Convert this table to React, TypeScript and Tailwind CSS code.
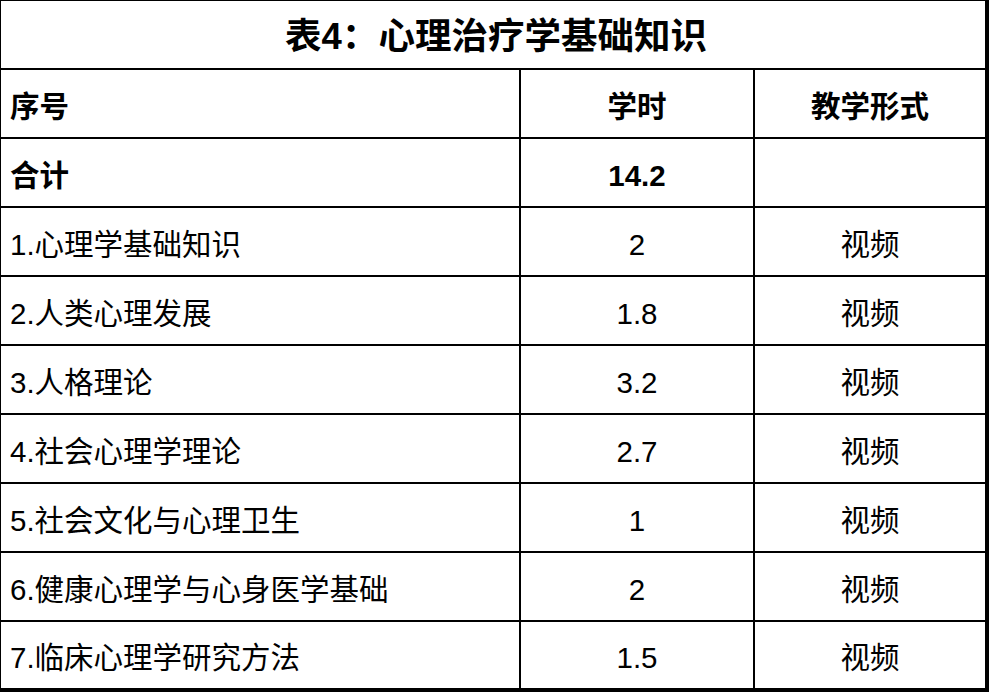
import React from "react";

const rows: [string, string, string][] = [
  ["1.心理学基础知识", "2", "视频"],
  ["2.人类心理发展", "1.8", "视频"],
  ["3.人格理论", "3.2", "视频"],
  ["4.社会心理学理论", "2.7", "视频"],
  ["5.社会文化与心理卫生", "1", "视频"],
  ["6.健康心理学与心身医学基础", "2", "视频"],
  ["7.临床心理学研究方法", "1.5", "视频"],
];

const font = { fontFamily: '"Liberation Sans", "Noto Sans CJK SC", sans-serif' };

function Row({
  a,
  b,
  c,
  bold,
  last,
}: {
  a: string;
  b: string;
  c: string;
  bold?: boolean;
  last?: boolean;
}) {
  const weight = bold ? "font-bold" : "font-normal";
  return (
    <div
      className={`flex ${last ? "flex-1" : "h-[69px] border-b-2"} border-black text-[29.5px] leading-none text-black ${weight}`}
    >
      <div className="w-[520px] border-r-2 border-black flex items-center pl-[9px] pt-[6px]">{a}</div>
      <div className="w-[234px] border-r-2 border-black flex items-center justify-center pt-[6px]">{b}</div>
      <div className="flex-1 flex items-center justify-center pt-[6px]">{c}</div>
    </div>
  );
}

export default function App() {
  return (
    <div className="bg-white" style={font}>
      <div className="w-[989px] h-[692px] flex flex-col border-l border-t border-r-4 border-b-4 border-black bg-white">
        <div className="h-[69px] border-b-2 border-black flex items-center justify-center pt-[5px] pl-[6px] text-[36.5px] leading-none font-bold text-black">
          表4：心理治疗学基础知识
        </div>
        <Row a="序号" b="学时" c="教学形式" bold />
        <Row a="合计" b="14.2" c="" bold />
        {rows.map((r, i) => (
          <Row key={i} a={r[0]} b={r[1]} c={r[2]} last={i === rows.length - 1} />
        ))}
      </div>
    </div>
  );
}
